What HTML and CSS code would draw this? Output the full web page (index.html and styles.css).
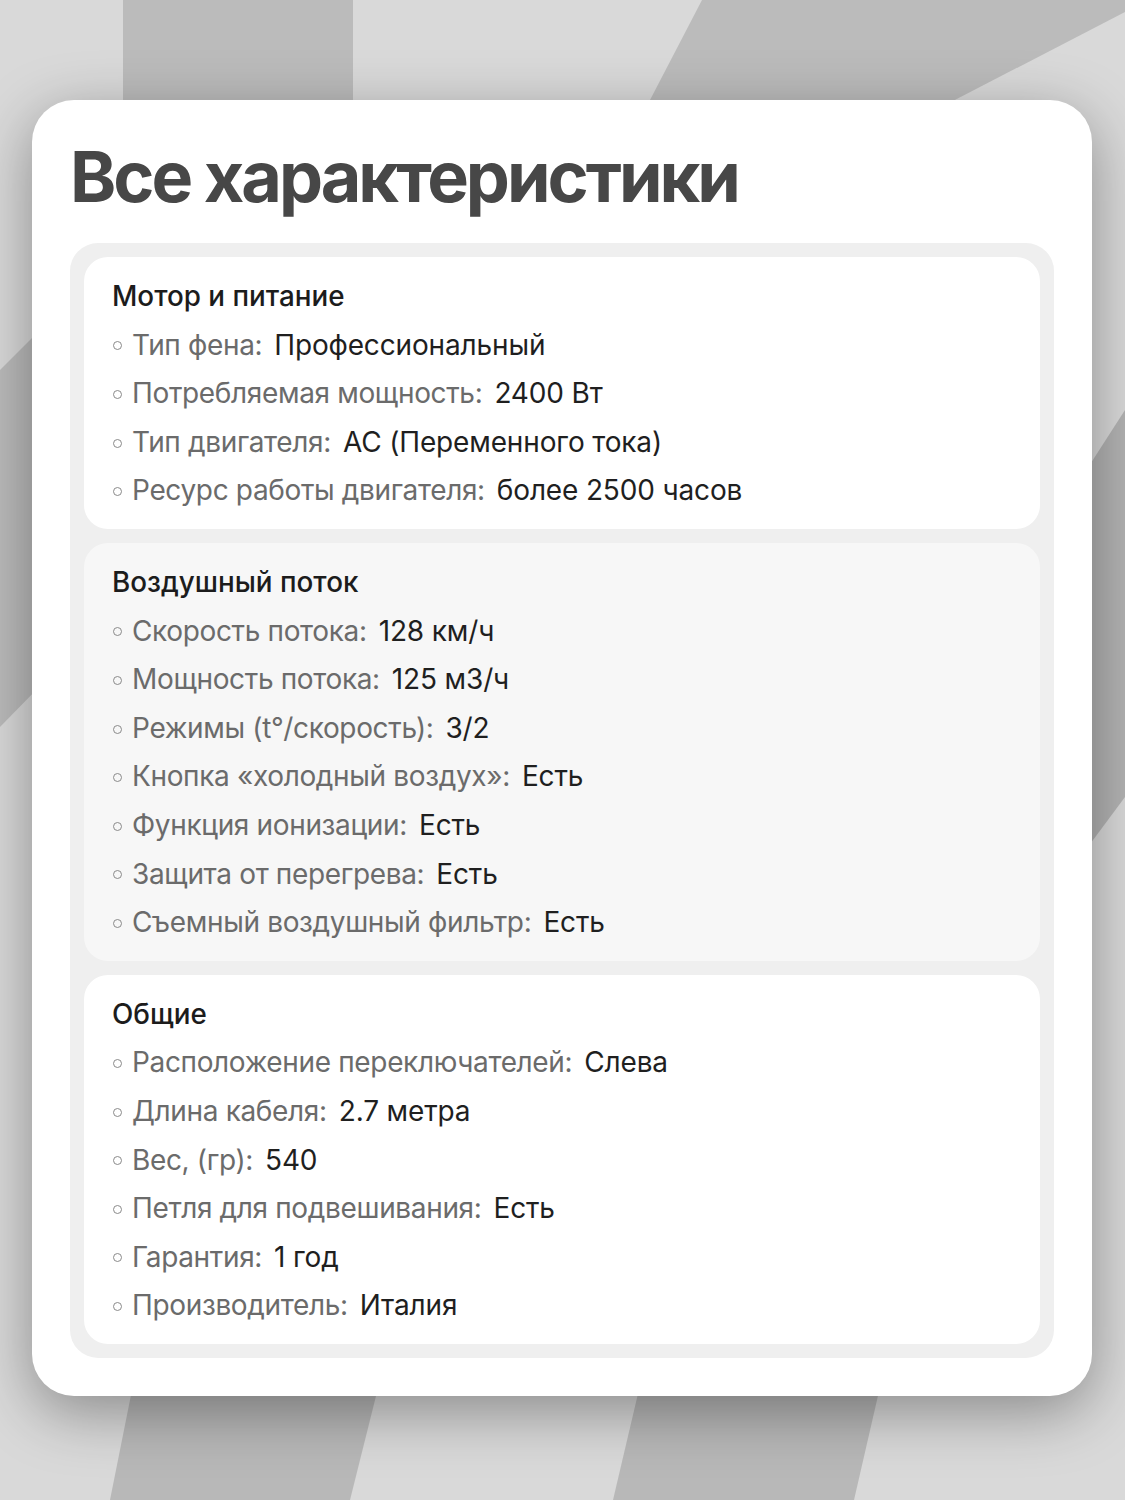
FILE: index.html
```html
<!DOCTYPE html>
<html lang="ru">
<head>
<meta charset="utf-8">
<link rel="stylesheet" href="styles.css">
</head>
<body>
<div class="page">
  <svg class="bg" width="1125" height="1500" viewBox="0 0 1125 1500" aria-hidden="true">
    <rect x="0" y="0" width="1125" height="1500" fill="#d9d9d9"/>
    <rect x="123" y="0" width="230" height="200" fill="#bbbbbb"/>
    <polygon points="702,0 1125,0 1125,12 839,160 598,200" fill="#bbbbbb"/>
    <polygon points="0,370 300,70 300,420 0,727" fill="#bbbbbb"/>
    <polygon points="1125,410 900,760 900,1100 1125,797" fill="#b3b3b3"/>
    <polygon points="150,1300 400,1300 350,1500 110,1500" fill="#b8b8b8"/>
    <polygon points="660,1300 900,1300 854,1500 613,1500" fill="#b8b8b8"/>
  </svg>
  <main class="card">
    <h1 class="title">Все характеристики</h1>
    <div class="groups">
      <section class="group">
        <h2 class="group-title">Мотор и питание</h2>
        <ul class="specs">
          <li><span class="k">Тип фена:</span><span class="v">Профессиональный</span></li>
          <li><span class="k">Потребляемая мощность:</span><span class="v">2400 Вт</span></li>
          <li><span class="k">Тип двигателя:</span><span class="v">AC (Переменного тока)</span></li>
          <li><span class="k">Ресурс работы двигателя:</span><span class="v">более 2500 часов</span></li>
        </ul>
      </section>
      <section class="group group-alt">
        <h2 class="group-title">Воздушный поток</h2>
        <ul class="specs">
          <li><span class="k">Скорость потока:</span><span class="v">128 км/ч</span></li>
          <li><span class="k">Мощность потока:</span><span class="v">125 м3/ч</span></li>
          <li><span class="k">Режимы (t°/скорость):</span><span class="v">3/2</span></li>
          <li><span class="k">Кнопка «холодный воздух»:</span><span class="v">Есть</span></li>
          <li><span class="k">Функция ионизации:</span><span class="v">Есть</span></li>
          <li><span class="k">Защита от перегрева:</span><span class="v">Есть</span></li>
          <li><span class="k">Съемный воздушный фильтр:</span><span class="v">Есть</span></li>
        </ul>
      </section>
      <section class="group">
        <h2 class="group-title">Общие</h2>
        <ul class="specs">
          <li><span class="k">Расположение переключателей:</span><span class="v">Слева</span></li>
          <li><span class="k">Длина кабеля:</span><span class="v">2.7 метра</span></li>
          <li><span class="k">Вес, (гр):</span><span class="v">540</span></li>
          <li><span class="k">Петля для подвешивания:</span><span class="v">Есть</span></li>
          <li><span class="k">Гарантия:</span><span class="v">1 год</span></li>
          <li><span class="k">Производитель:</span><span class="v">Италия</span></li>
        </ul>
      </section>
    </div>
  </main>
</div>
</body>
</html>
```

FILE: styles.css
```css
* { box-sizing: border-box; }
html, body { margin: 0; padding: 0; }
body {
  width: 1125px;
  height: 1500px;
  overflow: hidden;
  background: #d9d9d9;
  font-family: Inter, "Noto Sans", "Liberation Sans", sans-serif;
}
.page {
  position: relative;
  width: 1125px;
  height: 1500px;
  padding-top: 100px;
  padding-left: 32px;
}
.bg {
  position: absolute;
  left: 0;
  top: 0;
  z-index: 0;
}
.card {
  position: relative;
  z-index: 1;
  width: 1060px;
  height: 1296px;
  background: #ffffff;
  border-radius: 42px;
  padding: 42px 38px 36px 38px;
  box-shadow: 0 16px 60px rgba(0, 0, 0, 0.36);
  display: flex;
  flex-direction: column;
}
.title {
  margin: 0 0 31px 0;
  font-size: 70px;
  line-height: 70px;
  font-weight: 700;
  color: #474747;
  letter-spacing: -3px;
}
.groups {
  background: #efefef;
  border-radius: 28px;
  padding: 14px;
  display: flex;
  flex-direction: column;
  gap: 14px;
}
.group {
  background: #ffffff;
  border-radius: 24px;
  padding: 15px 28px 14px 28px;
}
.group-alt {
  background: #f7f7f7;
}
.group-title {
  margin: 0;
  font-size: 27.8px;
  line-height: 48.6px;
  font-weight: 500;
  color: #1c1c1c;
}
.specs {
  list-style: none;
  margin: 0;
  padding: 0;
}
.specs li {
  display: flex;
  align-items: center;
  font-size: 28px;
  line-height: 48.6px;
}
.specs li::before {
  content: "";
  width: 7px;
  height: 7px;
  border: 1.3px solid #8a8a8a;
  border-radius: 50%;
  margin: 2px 10px 0 1px;
  flex: none;
}
.k {
  color: #6b6b6b;
  letter-spacing: -0.35px;
}
.v {
  color: #1f1f1f;
  margin-left: 12px;
  letter-spacing: -0.15px;
}
```
